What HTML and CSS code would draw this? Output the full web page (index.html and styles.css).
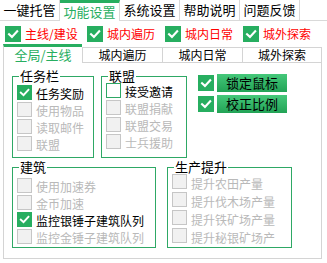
FILE: index.html
```html
<!DOCTYPE html>
<html lang="zh">
<head>
<meta charset="utf-8">
<link rel="stylesheet" href="styles.css">
</head>
<body>
<div class="tabs">
  <div class="tab">一键托管</div>
  <div class="tab active">功能设置</div>
  <div class="tab">系统设置</div>
  <div class="tab">帮助说明</div>
  <div class="tab">问题反馈</div>
</div>
<div class="mods">
  <label class="mod m1"><span class="box on big"><svg viewBox="0 0 16 16"><path d="M3.5 8.2 L6.8 11.3 L12.8 4.8"/></svg></span>主线/建设</label>
  <label class="mod m2"><span class="box on big"><svg viewBox="0 0 16 16"><path d="M3.5 8.2 L6.8 11.3 L12.8 4.8"/></svg></span>城内遍历</label>
  <label class="mod m3"><span class="box on big"><svg viewBox="0 0 16 16"><path d="M3.5 8.2 L6.8 11.3 L12.8 4.8"/></svg></span>城内日常</label>
  <label class="mod m4"><span class="box on big"><svg viewBox="0 0 16 16"><path d="M3.5 8.2 L6.8 11.3 L12.8 4.8"/></svg></span>城外探索</label>
</div>
<div class="panel">
  <div class="subtabs">
    <div class="subtab active">全局/主线</div>
    <div class="subtab">城内遍历</div>
    <div class="subtab">城内日常</div>
    <div class="subtab">城外探索</div>
  </div>
  <div class="body">
    <div class="row">
      <div class="group g-task">
        <span class="gtitle">任务栏</span>
        <label class="item"><span class="box on"><svg viewBox="0 0 16 16"><path d="M3.5 8.2 L6.8 11.3 L12.8 4.8"/></svg></span>任务奖励</label>
        <label class="item off"><span class="box"></span>使用物品</label>
        <label class="item off"><span class="box"></span>读取邮件</label>
        <label class="item off"><span class="box"></span>联盟</label>
      </div>
      <div class="group g-union">
        <span class="gtitle">联盟</span>
        <label class="item"><span class="box empty"></span>接受邀请</label>
        <label class="item off"><span class="box"></span>联盟捐献</label>
        <label class="item off"><span class="box"></span>联盟交易</label>
        <label class="item off"><span class="box"></span>士兵援助</label>
      </div>
      <div class="btns">
        <div class="brow"><span class="box on big"><svg viewBox="0 0 16 16"><path d="M3.5 8.2 L6.8 11.3 L12.8 4.8"/></svg></span><button class="gbtn">锁定鼠标</button></div>
        <div class="brow"><span class="box on big"><svg viewBox="0 0 16 16"><path d="M3.5 8.2 L6.8 11.3 L12.8 4.8"/></svg></span><button class="gbtn">校正比例</button></div>
      </div>
    </div>
    <div class="row">
      <div class="group g-build">
        <span class="gtitle">建筑</span>
        <label class="item off"><span class="box"></span>使用加速券</label>
        <label class="item off"><span class="box"></span>金币加速</label>
        <label class="item"><span class="box on"><svg viewBox="0 0 16 16"><path d="M3.5 8.2 L6.8 11.3 L12.8 4.8"/></svg></span>监控银锤子建筑队列</label>
        <label class="item off"><span class="box"></span>监控金锤子建筑队列</label>
      </div>
      <div class="group g-prod">
        <span class="gtitle">生产提升</span>
        <label class="item off"><span class="box"></span>提升农田产量</label>
        <label class="item off"><span class="box"></span>提升伐木场产量</label>
        <label class="item off"><span class="box"></span>提升铁矿场产量</label>
        <label class="item off"><span class="box"></span>提升秘银矿场产</label>
      </div>
    </div>
  </div>
</div>
</body>
</html>
```
FILE: styles.css
```css
* { box-sizing: border-box; }
html, body { margin: 0; padding: 0; background: #fff; }
body {
  width: 327px;
  height: 263px;
  overflow: hidden;
  font-family: "Noto Sans CJK SC", "Noto Sans", sans-serif;
  font-size: 12px;
  color: #000;
}

/* top tabs */
.tabs {
  display: flex;
  height: 21px;
  border-bottom: 1px solid #d9d9d9;
}
.tab {
  width: 60px;
  height: 20px;
  border-right: 1px solid #d9d9d9;
  text-align: center;
  font-size: 13px;
  line-height: 20px;
}
.tab.active {
  height: 21px;
  margin-bottom: -1px;
  border-top: 3px solid #27ae60;
  background: #fff;
  color: #27ae60;
  line-height: 17px;
}

/* module checkboxes */
.mods {
  display: flex;
  height: 23px;
  padding: 5px 0 0 5px;
}
.mod {
  display: flex;
  align-items: center;
  gap: 4px;
  height: 16px;
  color: #ff0000;
  line-height: 16px;
}
.m1 { width: 82px; }
.m2, .m3 { width: 78px; }

/* checkbox */
.box {
  flex: none;
  display: inline-flex;
  width: 15px;
  height: 15px;
  border: 1px solid #c6c6c6;
  background: #f1f1f1;
}
.box.big { width: 16px; height: 16px; }
.box.on { background: #27ae60; border-color: #27ae60; }
.box.empty { background: #fff; border-color: #2ea865; }
.box svg { width: 100%; height: 100%; }
.box svg path {
  fill: none;
  stroke: #fff;
  stroke-width: 2.4;
  stroke-linecap: square;
  stroke-linejoin: miter;
}

/* panel */
.panel {
  width: 319px;
  margin-left: 3px;
}
.subtabs {
  display: flex;
  height: 19px;
  border-bottom: 1px solid #d4d4d4;
}
.subtab {
  width: 80px;
  height: 15px;
  margin-top: 3px;
  border-top: 1px solid #d4d4d4;
  border-left: 1px solid #d4d4d4;
  text-align: center;
  line-height: 14px;
}
.subtab:first-child { width: 79px; }
.subtab:last-child { border-right: 1px solid #d4d4d4; }
.subtab.active {
  height: 19px;
  margin-top: 0;
  margin-bottom: -1px;
  border-top: 3px solid #27ae60;
  background: #fff;
  color: #27ae60;
  font-size: 13px;
  line-height: 16px;
}
.body {
  height: 196px;
  border: 1px solid #d4d4d4;
  border-top: none;
  padding: 13px 0 0 8px;
  display: flex;
  flex-direction: column;
  gap: 9px;
}
.row {
  display: flex;
  align-items: flex-start;
}

/* groups */
.group {
  position: relative;
  border: 1px solid #2ea865;
  display: flex;
  flex-direction: column;
  padding-left: 4px;
}
.gtitle {
  position: absolute;
  top: -8px;
  left: 6px;
  padding: 0 1px;
  background: #fff;
  line-height: 14px;
  font-size: 13px;
}
.item {
  display: flex;
  align-items: center;
  gap: 4px;
  height: 17px;
  line-height: 15px;
  white-space: nowrap;
}
.item .box { margin-bottom: 2px; }
.item.off { color: #b9b9b9; }

.g-task { width: 82px; height: 82px; padding-top: 8px; }
.g-union { width: 86px; height: 82px; padding-top: 6px; margin-left: 7px; }
.g-build { width: 144px; height: 81px; padding-top: 10px; }
.g-prod { width: 125px; height: 81px; padding-top: 6px; margin-left: 11px; }
.g-prod .item { height: 18px; }
.g-prod .item .box { margin-bottom: 3px; }

/* buttons */
.btns {
  margin: -2px 0 0 11px;
  display: flex;
  flex-direction: column;
  gap: 3px;
}
.brow {
  display: flex;
  align-items: center;
  gap: 3px;
}
.gbtn {
  width: 70px;
  height: 18px;
  padding: 0;
  border: none;
  background: linear-gradient(#45c87a, #22a356);
  font-family: "Noto Sans CJK SC", "Noto Sans", sans-serif;
  font-size: 13px;
  line-height: 18px;
  color: #000;
}
```
